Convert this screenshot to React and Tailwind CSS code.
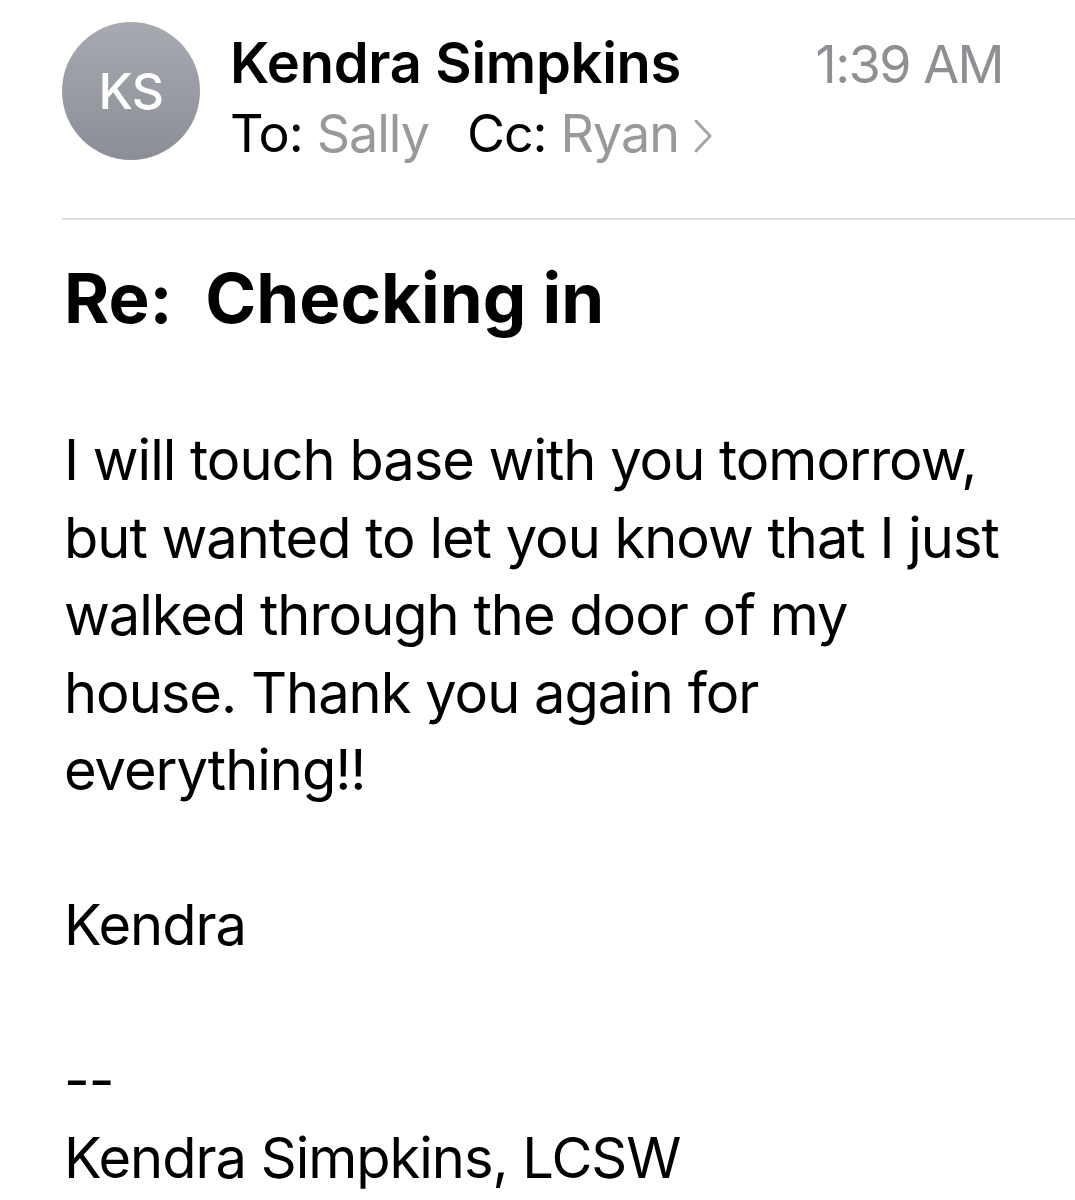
import React from "react";

const bodyLines = [
  "I will touch base with you tomorrow,",
  "but wanted to let you know that I just",
  "walked through the door of my",
  "house. Thank you again for",
  "everything!!",
];

export default function App() {
  return (
    <div
      className="w-[1075px] h-[1200px] overflow-hidden bg-white text-black"
      style={{ fontFamily: "Inter, 'Noto Sans', sans-serif" }}
    >
      <div className="flex items-start pl-[62px] pt-[22px] pr-[72px]">
        <div className="w-[138px] h-[138px] shrink-0 rounded-full bg-gradient-to-b from-[#a8aab1] to-[#8c8e97] flex items-center justify-center">
          <span className="text-white text-[50px] font-medium tracking-[-0.5px] leading-none">KS</span>
        </div>
        <div className="flex-1 ml-[30px] pt-[8px]">
          <div className="flex items-baseline justify-between">
            <span className="text-[56px] font-semibold leading-[66px] tracking-[-0.3px]">
              Kendra Simpkins
            </span>
            <span className="text-[52px] leading-[66px] text-[#8e8e93] tracking-[-1.5px]">
              1:39 AM
            </span>
          </div>
          <div className="flex items-center text-[52px] leading-[72px] tracking-[-1px]">
            <span>To:</span>
            <span className="ml-[14px] text-[#98989d]">Sally</span>
            <span className="ml-[38px]">Cc:</span>
            <span className="ml-[14px] text-[#98989d]">Ryan</span>
            <svg className="ml-[14px] mt-[4px]" width="20" height="36" viewBox="0 0 20 36" fill="none">
              <path d="M3 3 L17 18 L3 33" stroke="#a3a3a8" strokeWidth="3" strokeLinecap="round" strokeLinejoin="round" />
            </svg>
          </div>
        </div>
      </div>

      <div className="ml-[62px] mt-[48px] h-[2px] bg-[#dcdce0]" />

      <div className="pl-[64px] pr-[40px]">
        <h1 className="mt-[38px] text-[69px] font-bold leading-[80px] tracking-[0px] whitespace-pre">
          {"Re:  Checking in"}
        </h1>

        <div className="mt-[84px] text-[56px] leading-[77.5px] tracking-[-1px]">
          {bodyLines.map((l) => (
            <div key={l}>{l}</div>
          ))}
          <div className="h-[77.5px]" />
          <div>Kendra</div>
          <div className="h-[77.5px]" />
          <div>--</div>
          <div>Kendra Simpkins, LCSW</div>
        </div>
      </div>
    </div>
  );
}
